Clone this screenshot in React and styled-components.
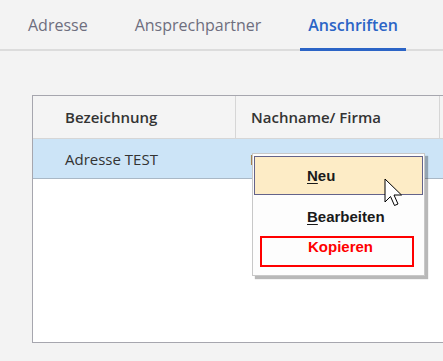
import React from 'react'
import styled, {createGlobalStyle} from 'styled-components'

const Global = createGlobalStyle`
    html, body {
        margin: 0;
        background: #f3f3f3;
        overflow: hidden;
    }
    body {
        font-family: "Open Sans", "Noto Sans", sans-serif;
    }
`

const Page = styled.div`
    width: 443px;
    height: 361px;
    display: flex;
    flex-direction: column;
`

const TabBar = styled.nav`
    height: 49px;
    display: flex;
    align-items: stretch;
    padding-left: 20px;
    gap: 31px;
    border-bottom: 2px solid #dcdcdc;
    flex-shrink: 0;
`

const Tab = styled.div`
    padding: 0 8px;
    display: flex;
    align-items: center;
    font-size: 16px;
    color: ${p => (p.active ? '#2b64c6' : '#6e6e7e')};
    font-weight: ${p => (p.active ? 600 : 400)};
    border-bottom: 3px solid ${p => (p.active ? '#2b64c6' : 'transparent')};
    margin-bottom: -2px;
    padding-top: 1px;
    white-space: nowrap;
`

const Content = styled.main`
    padding: 44px 0 0 32px;
`

const GridWrap = styled.div`
    position: relative;
`

const Grid = styled.div`
    width: 440px;
    height: 246px;
    border: 1px solid #a6a6ae;
    border-right: none;
    background: #fff;
`

const Row = styled.div`
    display: grid;
    grid-template-columns: 202px 204px 40px;
    height: ${p => (p.head ? '42px' : '39px')};
    background: ${p => (p.selected ? '#cce4f7' : '#f4f4f4')};
    border-bottom: 1px solid ${p => (p.selected ? '#a9b8c6' : '#d6d6d6')};
`

const Cell = styled.div`
    display: flex;
    align-items: center;
    padding-left: ${p => (p.first ? '32px' : '15px')};
    font-size: 15px;
    color: #333;
    font-weight: ${p => (p.head ? 600 : 400)};
    border-left: ${p => (p.head && !p.first ? '1px solid #d6d6d6' : 'none')};
    white-space: nowrap;
    overflow: hidden;
`

const Menu = styled.div`
    position: absolute;
    left: 220px;
    top: 58px;
    width: 169px;
    padding: 2px 1px 8px;
    background: #fdfdfd;
    border: 1px solid #c8c8c8;
    box-shadow: 3px 3px 1px rgba(0, 0, 0, 0.28);
    font-family: "Liberation Sans", Arial, sans-serif;
    font-weight: bold;
    font-size: 15px;
`

const Item = styled.div`
    height: 37px;
    box-sizing: content-box;
    display: flex;
    align-items: center;
    padding: ${p => (p.hover ? '0' : '3px')} 0 0 52px;
    height: ${p => (p.hover ? '37px' : '34px')};
    color: #1a1a1a;
    border: 1px solid ${p => (p.hover ? '#63638a' : 'transparent')};
    background: ${p => (p.hover ? '#fdecc6' : 'transparent')};

    u {
        text-decoration-thickness: 1px;
        text-underline-offset: 2px;
    }
`

const Marked = styled.div`
    margin: 2px 0 0 6px;
    width: 154px;
    height: 31px;
    border: 2px solid #ff0000;
    color: #ff0000;
    padding: 0 0 0 46px;
    box-sizing: border-box;
    display: flex;
    align-items: flex-start;
`

const Pointer = styled.svg`
    position: absolute;
    left: 352px;
    top: 83px;
`

const App = () => (
    <Page>
        <Global />
        <TabBar>
            <Tab>Adresse</Tab>
            <Tab>Ansprechpartner</Tab>
            <Tab active>Anschriften</Tab>
            <Tab>Kontakte</Tab>
        </TabBar>
        <Content>
            <GridWrap>
                <Grid>
                    <Row head>
                        <Cell head first>Bezeichnung</Cell>
                        <Cell head>Nachname/ Firma</Cell>
                        <Cell head>Vorname</Cell>
                    </Row>
                    <Row selected>
                        <Cell first>Adresse TEST</Cell>
                        <Cell>Muster</Cell>
                        <Cell />
                    </Row>
                </Grid>
                <Menu>
                    <Item hover><span><u>N</u>eu</span></Item>
                    <Item><span><u>B</u>earbeiten</span></Item>
                    <Marked>Kopieren</Marked>
                </Menu>
                <Pointer width="22" height="32" viewBox="0 0 22 32">
                    <path
                        d="M1 1 L1 24 L6.5 18.5 L10.5 27.5 L14 26 L10 17 L17.5 17 Z"
                        fill="#fff"
                        stroke="#000"
                        strokeWidth="1"
                        strokeLinejoin="round"
                    />
                </Pointer>
            </GridWrap>
        </Content>
    </Page>
)

export default App
